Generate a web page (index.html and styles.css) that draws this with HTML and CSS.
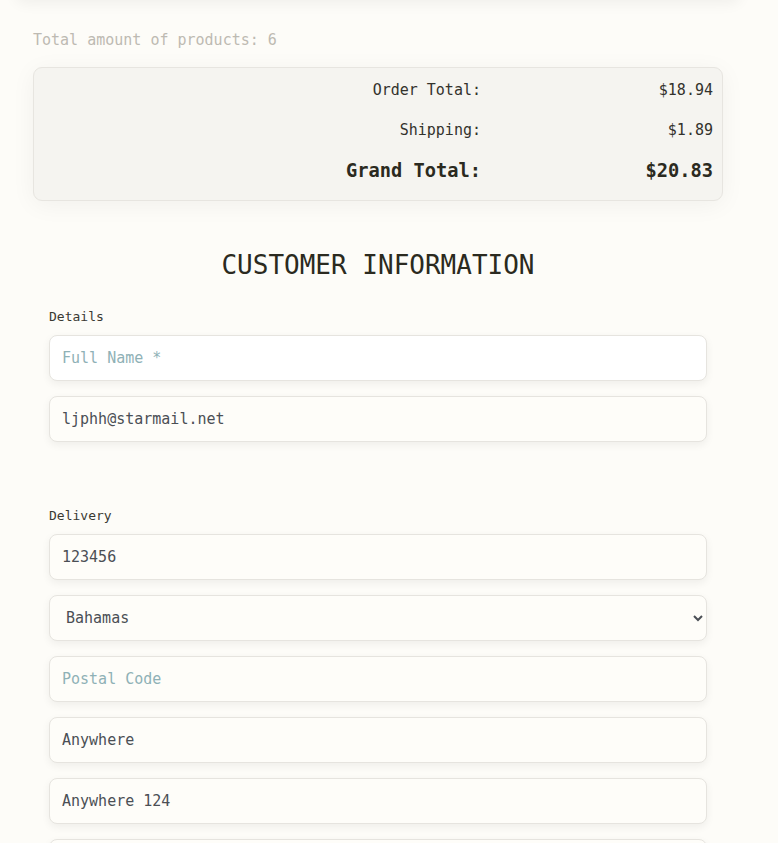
FILE: index.html
```html
<!DOCTYPE html>
<html lang="en">
<head>
<meta charset="utf-8">
<title>Checkout</title>
<link rel="stylesheet" href="styles.css">
</head>
<body>
<div class="page">
  <div class="cart-card"></div>
  <p class="count">Total amount of products: 6</p>
  <div class="summary">
    <div class="row"><span class="label">Order Total:</span><span class="value">$18.94</span></div>
    <div class="row"><span class="label">Shipping:</span><span class="value">$1.89</span></div>
    <div class="row grand"><span class="label">Grand Total:</span><span class="value">$20.83</span></div>
  </div>
  <h2 class="title">CUSTOMER INFORMATION</h2>
  <form class="form">
    <div class="group">
      <label class="group-label">Details</label>
      <input class="field field-white" type="text" placeholder="Full Name *">
      <input class="field" type="email" value="ljphh@starmail.net">
    </div>
    <div class="group delivery">
      <label class="group-label">Delivery</label>
      <input class="field" type="text" value="123456">
      <select class="field select">
        <option>Bahamas</option>
      </select>
      <input class="field" type="text" placeholder="Postal Code">
      <input class="field" type="text" value="Anywhere">
      <input class="field" type="text" value="Anywhere 124">
      <input class="field" type="text" placeholder="">
    </div>
  </form>
</div>
</body>
</html>
```

FILE: styles.css
```css
html, body {
  margin: 0;
  padding: 0;
  background: #fdfcf8;
}
body {
  font-family: "DejaVu Sans Mono", "Liberation Mono", monospace;
  color: #2b2a22;
  overflow: hidden;
}
.page {
  width: 690px;
  margin-left: 33px;
}
.cart-card {
  height: 40px;
  margin: -40px -18px 0;
  background: #fbfaf6;
  border-radius: 10px;
  box-shadow: 0 4px 14px rgba(0, 0, 0, 0.05);
}
.count {
  margin: 0;
  padding-top: 31px;
  height: 23px;
  line-height: 18px;
  font-size: 15px;
  color: #bdbab2;
}
.summary {
  margin-top: 13px;
  background: #f5f4f0;
  border: 1px solid #e7e5e0;
  border-radius: 9px;
  padding: 2px 9px 9px 10px;
  box-shadow: 0 4px 24px rgba(0, 0, 0, 0.05);
}
.row {
  display: grid;
  grid-template-columns: 437px 1fr;
  height: 40px;
  align-items: center;
  font-size: 15px;
  color: #33322c;
}
.row .label, .row .value {
  text-align: right;
}
.row.grand {
  height: 41px;
  font-size: 18.7px;
  font-weight: bold;
  color: #2b2a20;
}
.title {
  margin: 46px 0 0;
  text-align: center;
  font-size: 26px;
  font-weight: normal;
  line-height: 36px;
  color: #2b2a20;
}
.form {
  padding: 0 16px;
}
.group {
  display: flex;
  flex-direction: column;
  gap: 15px;
  margin-top: 26px;
}
.group-label {
  font-size: 13px;
  line-height: 16px;
  color: #3a3932;
  margin-bottom: -5px;
}
.delivery {
  margin-top: 66px;
}
.field {
  box-sizing: border-box;
  height: 46px;
  width: 100%;
  border: 1px solid #e6e4df;
  border-radius: 8px;
  background: #fefdf9;
  padding: 0 12px;
  font-family: "DejaVu Sans Mono", "Liberation Mono", monospace;
  font-size: 15px;
  color: #4b4f55;
  box-shadow: 0 3px 8px rgba(0, 0, 0, 0.06);
  outline: none;
}
.field-white {
  background: #ffffff;
}
.field::placeholder {
  color: #8fb1b6;
}
.select {
  padding: 0 10px 0 12px;
}
```
